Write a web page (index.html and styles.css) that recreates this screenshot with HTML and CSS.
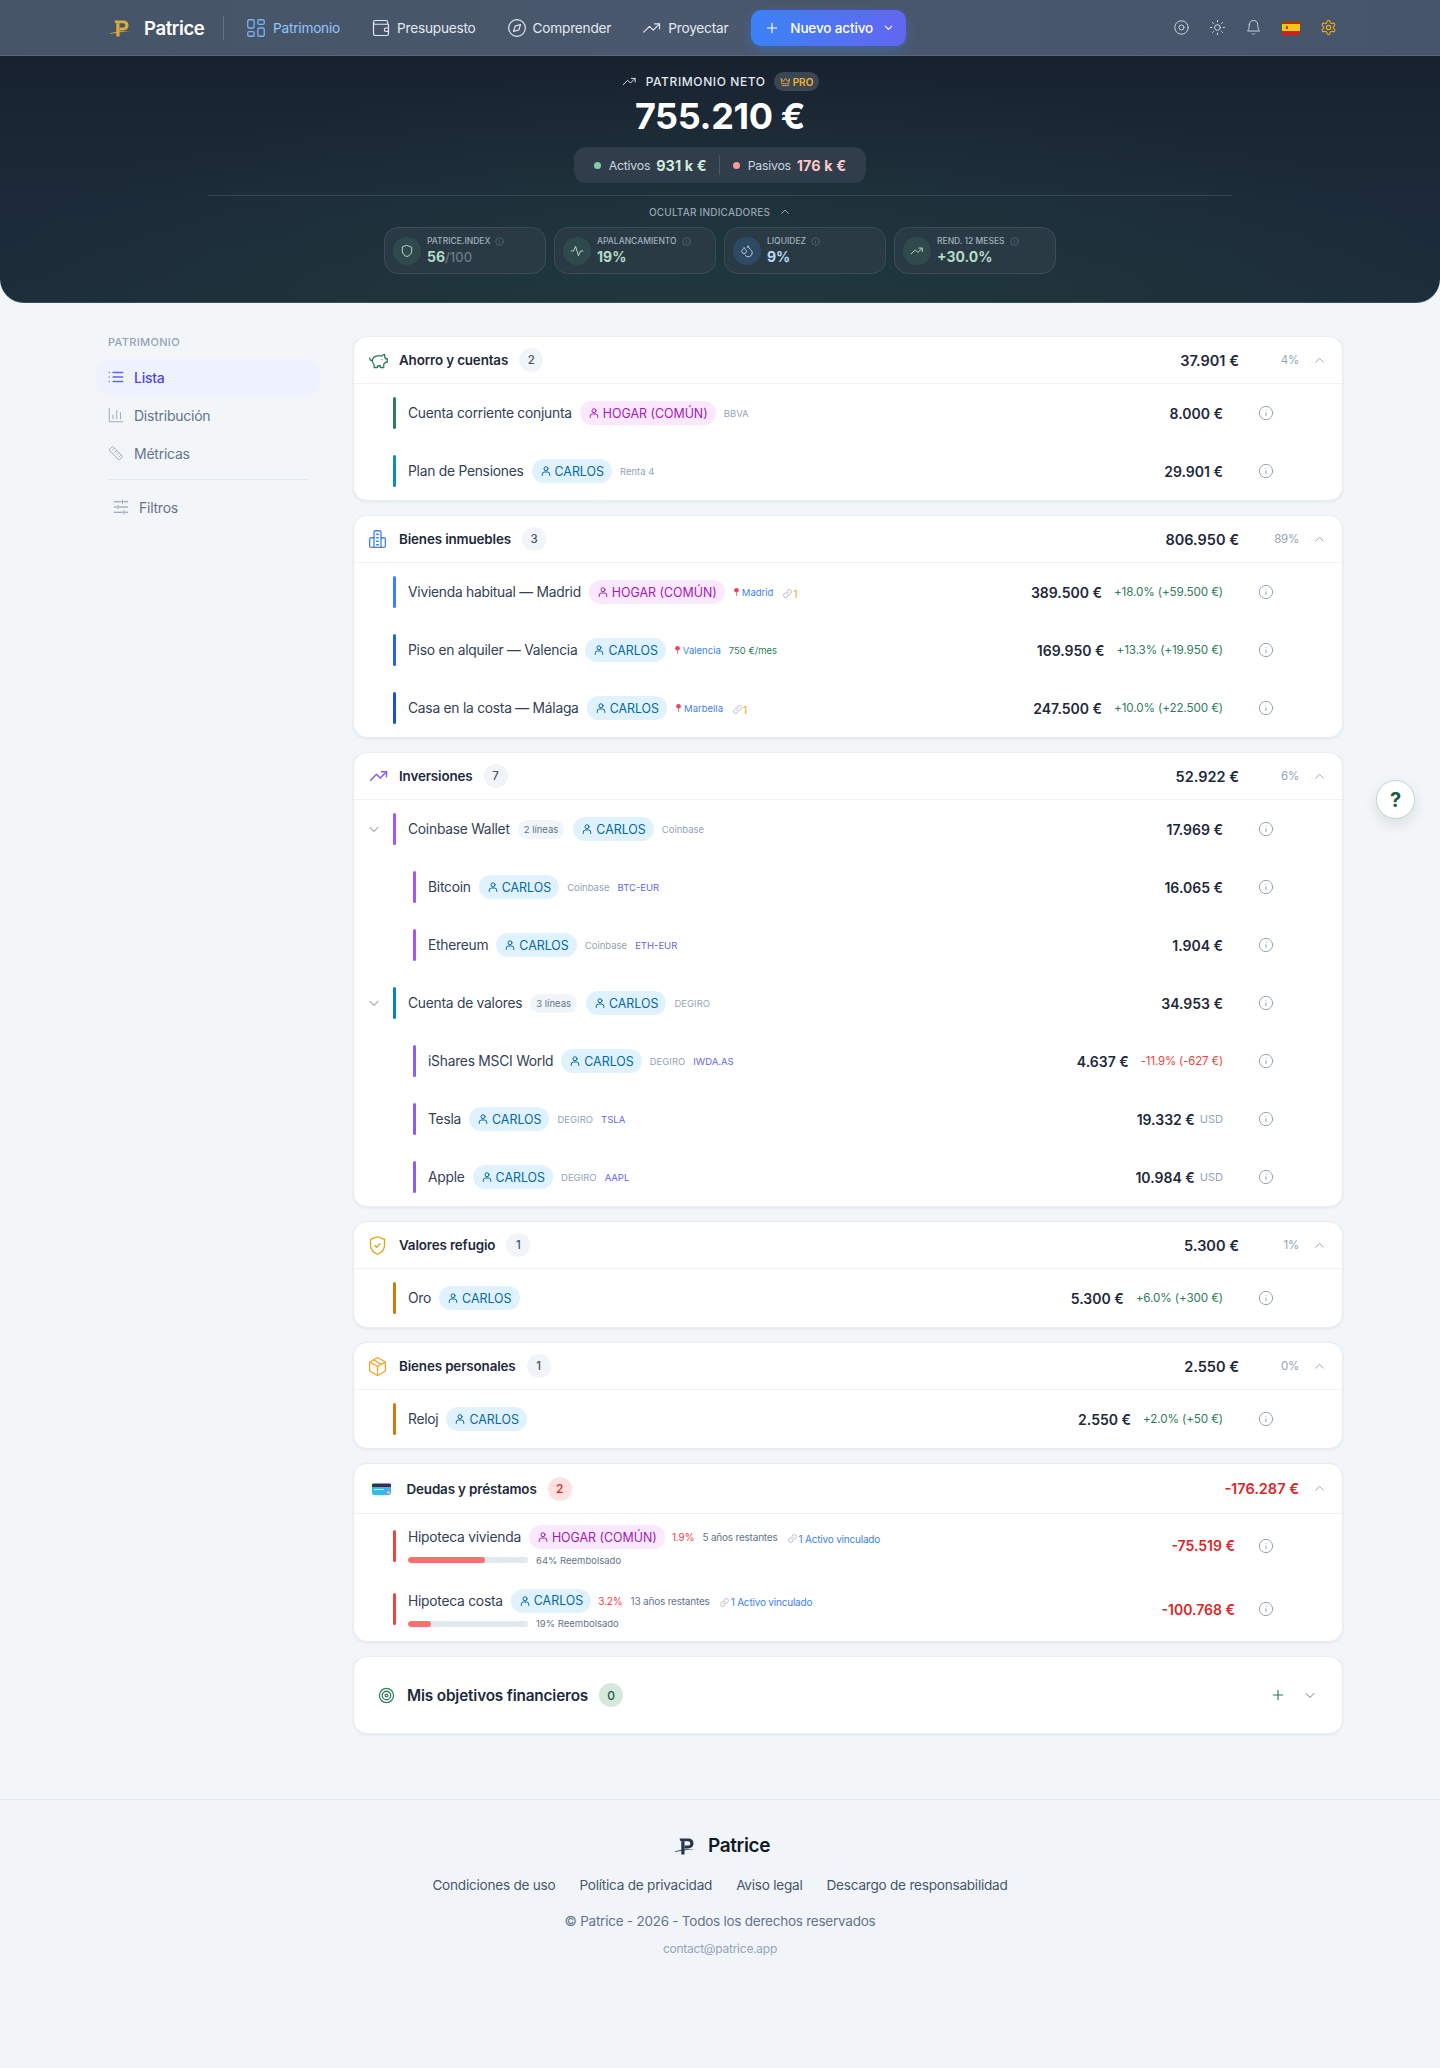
FILE: index.html
```html
<!DOCTYPE html>
<html lang="es">
<head>
<meta charset="utf-8">
<title>Patrice</title>
<link rel="stylesheet" href="styles.css">
</head>
<body>
<svg class="sprite" width="0" height="0" aria-hidden="true">
  <symbol id="i-user" viewBox="0 0 24 24"><circle cx="12" cy="7.5" r="4"/><path d="M4.5 21v-2.5a4.5 4.5 0 0 1 4.5-4.5h6a4.5 4.5 0 0 1 4.5 4.5V21"/></symbol>
  <symbol id="i-info" viewBox="0 0 24 24"><circle cx="12" cy="12" r="10"/><path d="M12 16v-4.5M12 8h.01"/></symbol>
  <symbol id="i-up" viewBox="0 0 24 24"><path d="M5 15l7-7 7 7"/></symbol>
  <symbol id="i-down" viewBox="0 0 24 24"><path d="M5 9l7 7 7-7"/></symbol>
  <symbol id="i-trend" viewBox="0 0 24 24"><path d="M2 17l7-7 4.500 4.500L21 7"/><path d="M15 7h6v6"/></symbol>
  <symbol id="i-link" viewBox="0 0 24 24"><path d="M10 14a4.500 4.500 0 0 0 6.500 0l3-3a4.600 4.600 0 0 0-6.500-6.500l-1.500 1.500"/><path d="M14 10a4.500 4.500 0 0 0-6.500 0l-3 3a4.600 4.600 0 0 0 6.500 6.500l1.500-1.500"/></symbol>
  <symbol id="i-logo" viewBox="0 0 20 17"><path d="M4.500 .5H13c3.500 0 5.500 2 5.500 4.800S16.500 10.500 13 10.500H9.500V7.600H12.800c1.600 0 2.500-.9 2.500-2.300S14.400 3.200 12.800 3.200H5.500z"/><path d="M6.300 3.200h3.200v13.300H6.300z"/><path d="M0 13.300C6 11.200 13 10.800 19.800 11.500 13 11.900 7 12.400 0 13.900z"/></symbol>
  <symbol id="i-pin" viewBox="0 0 12 16"><circle cx="6" cy="5" r="4"/><rect x="5.400" y="8" width="1.200" height="7" rx=".6"/></symbol>
</svg>

<header class="topbar">
  <a class="brand">
    <svg class="brand-logo"><use href="#i-logo"/></svg>
    <span>Patrice</span>
  </a>
  <span class="topbar-sep"></span>
  <nav class="topnav">
    <a class="topnav-item is-active">
      <svg class="ico" viewBox="0 0 24 24"><rect x="3" y="3" width="7" height="9" rx="1.500"/><rect x="14" y="3" width="7" height="5" rx="1.500"/><rect x="14" y="12" width="7" height="9" rx="1.500"/><rect x="3" y="16" width="7" height="5" rx="1.500"/></svg>
      Patrimonio
    </a>
    <a class="topnav-item">
      <svg class="ico" viewBox="0 0 24 24"><path d="M20 7.500V5a2 2 0 0 0-2-2H5a2 2 0 0 0-2 2v14a2 2 0 0 0 2 2h14a2 2 0 0 0 2-2V7.500H5a2 2 0 0 1-2-2"/><path d="M21 12h-3a2 2 0 0 0 0 4h3"/></svg>
      Presupuesto
    </a>
    <a class="topnav-item">
      <svg class="ico" viewBox="0 0 24 24"><circle cx="12" cy="12" r="10"/><path d="M16.200 7.800l-2 6.400-6.400 2 2-6.400z"/></svg>
      Comprender
    </a>
    <a class="topnav-item">
      <svg class="ico"><use href="#i-trend"/></svg>
      Proyectar
    </a>
  </nav>
  <button class="new-btn">
    <svg class="new-plus" viewBox="0 0 24 24"><path d="M12 4v16M4 12h16"/></svg>
    Nuevo activo
    <svg class="new-chev"><use href="#i-down"/></svg>
  </button>
  <div class="top-actions">
    <svg class="ico top-ico" viewBox="0 0 24 24"><circle cx="12" cy="12" r="9.500"/><circle cx="12" cy="12" r="3.500"/></svg>
    <svg class="ico top-ico" viewBox="0 0 24 24"><circle cx="12" cy="12" r="4"/><path d="M12 2v2M12 20v2M4.900 4.900l1.400 1.400M17.700 17.700l1.400 1.400M2 12h2M20 12h2M4.900 19.100l1.400-1.400M17.700 6.300l1.400-1.400"/></svg>
    <svg class="ico top-ico" viewBox="0 0 24 24"><path d="M6 8a6 6 0 0 1 12 0c0 7 2.500 9 2.500 9h-17S6 15 6 8"/><path d="M10.300 21a2 2 0 0 0 3.400 0"/></svg>
    <span class="flag"><span class="flag-mid"><span class="flag-crest"></span></span></span>
    <svg class="ico top-ico gear" viewBox="0 0 24 24"><path d="M12.200 2h-.4a2 2 0 0 0-2 2v.2a2 2 0 0 1-1 1.700l-.4.300a2 2 0 0 1-2 0l-.2-.1a2 2 0 0 0-2.700.700l-.2.400a2 2 0 0 0 .7 2.700l.2.100a2 2 0 0 1 1 1.700v.5a2 2 0 0 1-1 1.700l-.2.100a2 2 0 0 0-.7 2.700l.2.400a2 2 0 0 0 2.700.7l.2-.1a2 2 0 0 1 2 0l.4.300a2 2 0 0 1 1 1.700v.2a2 2 0 0 0 2 2h.4a2 2 0 0 0 2-2v-.2a2 2 0 0 1 1-1.700l.4-.3a2 2 0 0 1 2 0l.2.100a2 2 0 0 0 2.700-.7l.2-.4a2 2 0 0 0-.7-2.700l-.2-.1a2 2 0 0 1-1-1.700v-.5a2 2 0 0 1 1-1.700l.2-.1a2 2 0 0 0 .7-2.700l-.2-.4a2 2 0 0 0-2.700-.7l-.2.100a2 2 0 0 1-2 0l-.4-.3a2 2 0 0 1-1-1.700V4a2 2 0 0 0-2-2z"/><circle cx="12" cy="12" r="3"/></svg>
  </div>
</header>

<section class="hero">
  <div class="hero-label">
    <svg class="ico hero-trend"><use href="#i-trend"/></svg>
    <span>PATRIMONIO NETO</span>
    <span class="pro">
      <svg class="pro-ico" viewBox="0 0 24 24"><path d="M3 6l4.500 6L12 5l4.500 7L21 6l-2 11H5z"/><path d="M5 21h14"/></svg>PRO
    </span>
  </div>
  <div class="hero-amount">755.210 €</div>
  <div class="hero-pill">
    <span class="dot dot-green"></span><span class="pill-label">Activos</span><b class="pill-val val-green">931 k €</b>
    <span class="pill-sep"></span>
    <span class="dot dot-red"></span><span class="pill-label">Pasivos</span><b class="pill-val val-red">176 k €</b>
  </div>
  <div class="hero-divider"></div>
  <div class="hero-toggle">OCULTAR INDICADORES <svg class="ico toggle-chev"><use href="#i-up"/></svg></div>
  <div class="metrics">
    <div class="metric">
      <span class="metric-ico"><svg class="ico" viewBox="0 0 24 24"><path d="M12 2.500l8 3v6.500c0 5-3.500 8-8 9.500-4.500-1.500-8-4.500-8-9.500V5.500z"/></svg></span>
      <div><div class="metric-label">PATRICE.INDEX <svg class="mini-info"><use href="#i-info"/></svg></div><div class="metric-val">56<span class="metric-of">/100</span></div></div>
    </div>
    <div class="metric">
      <span class="metric-ico"><svg class="ico" viewBox="0 0 24 24"><path d="M2 12h4l3.500-8 5 16 3.500-8h4"/></svg></span>
      <div><div class="metric-label">APALANCAMIENTO <svg class="mini-info"><use href="#i-info"/></svg></div><div class="metric-val">19%</div></div>
    </div>
    <div class="metric">
      <span class="metric-ico ico-blue"><svg class="ico" viewBox="0 0 24 24"><path d="M7 16.500c2.200 0 4-1.800 4-4 0-1.200-.6-2.300-1.700-3.200S7.400 7.300 7 6c-.4 1.300-1.200 2.400-2.300 3.300S3 11.300 3 12.500c0 2.200 1.800 4 4 4z"/><path d="M12.600 6.100A11 11 0 0 0 14 3c.5 2.500 2 4.900 4 6.500s3 3.500 3 5.500a7 7 0 0 1-11.900 5"/></svg></span>
      <div><div class="metric-label">LIQUIDEZ <svg class="mini-info"><use href="#i-info"/></svg></div><div class="metric-val val-blue">9%</div></div>
    </div>
    <div class="metric">
      <span class="metric-ico"><svg class="ico"><use href="#i-trend"/></svg></span>
      <div><div class="metric-label">REND. 12 MESES <svg class="mini-info"><use href="#i-info"/></svg></div><div class="metric-val">+30.0%</div></div>
    </div>
  </div>
</section>

<main class="layout">
  <aside class="side">
    <div class="side-title">PATRIMONIO</div>
    <a class="side-item is-active">
      <svg class="ico" viewBox="0 0 24 24"><path d="M8 6h13M8 12h13M8 18h13M3 6h.01M3 12h.01M3 18h.01"/></svg>Lista
    </a>
    <a class="side-item">
      <svg class="ico" viewBox="0 0 24 24"><path d="M3 3v18h18M8 17v-5M13 17V6M18 17v-8"/></svg>Distribución
    </a>
    <a class="side-item">
      <svg class="ico" viewBox="0 0 24 24"><path d="M3 7.500L7.500 3 21 16.500 16.500 21z"/><path d="M7.500 8l1.500-1.500M10.500 11L12 9.500M13.500 14l1.500-1.500M16.500 17l1.500-1.500"/></svg>Métricas
    </a>
    <div class="side-sep"></div>
    <a class="side-filter">
      <svg class="ico" viewBox="0 0 24 24"><path d="M3 5h9M16 5h5M14 3v4M3 12h3M10 12h11M8 10v4M3 19h11M18 19h3M16 17v4"/></svg>Filtros
    </a>
  </aside>

  <div class="cards">
    <section class="card">
      <header class="card-head">
        <svg class="cat-ico c-green" viewBox="0 0 24 24"><path d="M19 5c-1.500 0-2.800 1.400-3 2-3.500-1.500-11-.3-11 5 0 1.800 0 3 2 4.500V20h4v-2h3v2h4v-4c1-.5 1.700-1 2-2h2v-4h-2c0-1-.5-1.500-1-2z"/><path d="M2 9v1c0 1.100.9 2 2 2h1"/><path d="M16 11h.01"/></svg>
        <h2 class="card-title">Ahorro y cuentas</h2><span class="count">2</span>
        <span class="card-total">37.901 €</span><span class="card-pct">4%</span>
        <svg class="card-chev"><use href="#i-up"/></svg>
      </header>
      <div class="row"><span class="bar b-green"></span><span class="name">Cuenta corriente conjunta</span><span class="tag tag-home"><svg class="tag-ico"><use href="#i-user"/></svg>HOGAR (COMÚN)</span><span class="meta">BBVA</span><span class="amount">8.000 €</span><svg class="row-info"><use href="#i-info"/></svg></div>
      <div class="row"><span class="bar b-teal"></span><span class="name">Plan de Pensiones</span><span class="tag"><svg class="tag-ico"><use href="#i-user"/></svg>CARLOS</span><span class="meta">Renta 4</span><span class="amount">29.901 €</span><svg class="row-info"><use href="#i-info"/></svg></div>
    </section>

    <section class="card">
      <header class="card-head">
        <svg class="cat-ico c-blue" viewBox="0 0 24 24"><path d="M8 21V4a2 2 0 0 1 2-2h4a2 2 0 0 1 2 2v17"/><path d="M8 10H5a2 2 0 0 0-2 2v7a2 2 0 0 0 2 2h14a2 2 0 0 0 2-2v-7a2 2 0 0 0-2-2h-3"/><path d="M11 6h2M11 10h2M11 14h2M11 18h2"/></svg>
        <h2 class="card-title">Bienes inmuebles</h2><span class="count">3</span>
        <span class="card-total">806.950 €</span><span class="card-pct">89%</span>
        <svg class="card-chev"><use href="#i-up"/></svg>
      </header>
      <div class="row"><span class="bar b-blue1"></span><span class="name">Vivienda habitual — Madrid</span><span class="tag tag-home"><svg class="tag-ico"><use href="#i-user"/></svg>HOGAR (COMÚN)</span><span class="place"><svg class="pin"><use href="#i-pin"/></svg>Madrid</span><span class="linked"><svg class="link-ico"><use href="#i-link"/></svg>1</span><span class="amount">389.500 €</span><span class="gain">+18.0% (+59.500 €)</span><svg class="row-info"><use href="#i-info"/></svg></div>
      <div class="row"><span class="bar b-blue2"></span><span class="name">Piso en alquiler — Valencia</span><span class="tag"><svg class="tag-ico"><use href="#i-user"/></svg>CARLOS</span><span class="place"><svg class="pin"><use href="#i-pin"/></svg>Valencia</span><span class="rent">750 €/mes</span><span class="amount">169.950 €</span><span class="gain">+13.3% (+19.950 €)</span><svg class="row-info"><use href="#i-info"/></svg></div>
      <div class="row"><span class="bar b-blue3"></span><span class="name">Casa en la costa — Málaga</span><span class="tag"><svg class="tag-ico"><use href="#i-user"/></svg>CARLOS</span><span class="place"><svg class="pin"><use href="#i-pin"/></svg>Marbella</span><span class="linked"><svg class="link-ico"><use href="#i-link"/></svg>1</span><span class="amount">247.500 €</span><span class="gain">+10.0% (+22.500 €)</span><svg class="row-info"><use href="#i-info"/></svg></div>
    </section>

    <section class="card">
      <header class="card-head">
        <svg class="cat-ico c-violet"><use href="#i-trend"/></svg>
        <h2 class="card-title">Inversiones</h2><span class="count">7</span>
        <span class="card-total">52.922 €</span><span class="card-pct">6%</span>
        <svg class="card-chev"><use href="#i-up"/></svg>
      </header>
      <div class="row row-group"><svg class="group-chev"><use href="#i-down"/></svg><span class="bar b-purple"></span><span class="name">Coinbase Wallet</span><span class="lines">2 líneas</span><span class="tag"><svg class="tag-ico"><use href="#i-user"/></svg>CARLOS</span><span class="meta">Coinbase</span><span class="amount">17.969 €</span><svg class="row-info"><use href="#i-info"/></svg></div>
      <div class="row row-sub"><span class="bar b-purple"></span><span class="name">Bitcoin</span><span class="tag"><svg class="tag-ico"><use href="#i-user"/></svg>CARLOS</span><span class="meta">Coinbase</span><span class="ticker">BTC-EUR</span><span class="amount">16.065 €</span><svg class="row-info"><use href="#i-info"/></svg></div>
      <div class="row row-sub"><span class="bar b-purple"></span><span class="name">Ethereum</span><span class="tag"><svg class="tag-ico"><use href="#i-user"/></svg>CARLOS</span><span class="meta">Coinbase</span><span class="ticker">ETH-EUR</span><span class="amount">1.904 €</span><svg class="row-info"><use href="#i-info"/></svg></div>
      <div class="row row-group"><svg class="group-chev"><use href="#i-down"/></svg><span class="bar b-sky"></span><span class="name">Cuenta de valores</span><span class="lines">3 líneas</span><span class="tag"><svg class="tag-ico"><use href="#i-user"/></svg>CARLOS</span><span class="meta">DEGIRO</span><span class="amount">34.953 €</span><svg class="row-info"><use href="#i-info"/></svg></div>
      <div class="row row-sub"><span class="bar b-violet"></span><span class="name">iShares MSCI World</span><span class="tag"><svg class="tag-ico"><use href="#i-user"/></svg>CARLOS</span><span class="meta">DEGIRO</span><span class="ticker">IWDA.AS</span><span class="amount">4.637 €</span><span class="loss">-11.9% (-627 €)</span><svg class="row-info"><use href="#i-info"/></svg></div>
      <div class="row row-sub"><span class="bar b-violet"></span><span class="name">Tesla</span><span class="tag"><svg class="tag-ico"><use href="#i-user"/></svg>CARLOS</span><span class="meta">DEGIRO</span><span class="ticker">TSLA</span><span class="amount">19.332 €</span><span class="cur">USD</span><svg class="row-info"><use href="#i-info"/></svg></div>
      <div class="row row-sub"><span class="bar b-violet"></span><span class="name">Apple</span><span class="tag"><svg class="tag-ico"><use href="#i-user"/></svg>CARLOS</span><span class="meta">DEGIRO</span><span class="ticker">AAPL</span><span class="amount">10.984 €</span><span class="cur">USD</span><svg class="row-info"><use href="#i-info"/></svg></div>
    </section>

    <section class="card">
      <header class="card-head">
        <svg class="cat-ico c-gold" viewBox="0 0 24 24"><path d="M12 2l8 3v7c0 5-3.500 8-8 10-4.500-2-8-5-8-10V5z"/><path d="M9 12l2 2 4-4"/></svg>
        <h2 class="card-title">Valores refugio</h2><span class="count">1</span>
        <span class="card-total">5.300 €</span><span class="card-pct">1%</span>
        <svg class="card-chev"><use href="#i-up"/></svg>
      </header>
      <div class="row"><span class="bar b-amber"></span><span class="name">Oro</span><span class="tag"><svg class="tag-ico"><use href="#i-user"/></svg>CARLOS</span><span class="amount">5.300 €</span><span class="gain">+6.0% (+300 €)</span><svg class="row-info"><use href="#i-info"/></svg></div>
    </section>

    <section class="card">
      <header class="card-head">
        <svg class="cat-ico c-orange" viewBox="0 0 24 24"><path d="M21 8a2 2 0 0 0-1-1.700l-7-4a2 2 0 0 0-2 0l-7 4A2 2 0 0 0 3 8v8a2 2 0 0 0 1 1.700l7 4a2 2 0 0 0 2 0l7-4a2 2 0 0 0 1-1.700z"/><path d="M3.300 7L12 12l8.700-5M12 22V12M7.500 4.300l9 5.200"/></svg>
        <h2 class="card-title">Bienes personales</h2><span class="count">1</span>
        <span class="card-total">2.550 €</span><span class="card-pct">0%</span>
        <svg class="card-chev"><use href="#i-up"/></svg>
      </header>
      <div class="row"><span class="bar b-amber"></span><span class="name">Reloj</span><span class="tag"><svg class="tag-ico"><use href="#i-user"/></svg>CARLOS</span><span class="amount">2.550 €</span><span class="gain">+2.0% (+50 €)</span><svg class="row-info"><use href="#i-info"/></svg></div>
    </section>

    <section class="card">
      <header class="card-head head-debt">
        <span class="debt-card"><span class="debt-stripe"></span><span class="debt-line"></span><span class="debt-chip"></span></span>
        <h2 class="card-title">Deudas y préstamos</h2><span class="count count-red">2</span>
        <span class="card-total total-red">-176.287 €</span>
        <svg class="card-chev"><use href="#i-up"/></svg>
      </header>
      <div class="row row-debt">
        <span class="bar b-red"></span>
        <div class="debt-main">
          <div class="debt-top"><span class="name">Hipoteca vivienda</span><span class="tag tag-home"><svg class="tag-ico"><use href="#i-user"/></svg>HOGAR (COMÚN)</span><span class="rate">1.9%</span><span class="years">5 años restantes</span><span class="linked-text"><svg class="link-ico"><use href="#i-link"/></svg>1 Activo vinculado</span></div>
          <div class="debt-progress"><span class="track"><span class="fill" style="width:64%"></span></span><span class="repaid">64% Reembolsado</span></div>
        </div>
        <span class="amount amount-red">-75.519 €</span><svg class="row-info"><use href="#i-info"/></svg>
      </div>
      <div class="row row-debt">
        <span class="bar b-red"></span>
        <div class="debt-main">
          <div class="debt-top"><span class="name">Hipoteca costa</span><span class="tag"><svg class="tag-ico"><use href="#i-user"/></svg>CARLOS</span><span class="rate">3.2%</span><span class="years">13 años restantes</span><span class="linked-text"><svg class="link-ico"><use href="#i-link"/></svg>1 Activo vinculado</span></div>
          <div class="debt-progress"><span class="track"><span class="fill" style="width:19%"></span></span><span class="repaid">19% Reembolsado</span></div>
        </div>
        <span class="amount amount-red">-100.768 €</span><svg class="row-info"><use href="#i-info"/></svg>
      </div>
    </section>

    <section class="card goals">
      <svg class="goal-ico" viewBox="0 0 24 24"><circle cx="12" cy="12" r="10"/><circle cx="12" cy="12" r="6"/><circle cx="12" cy="12" r="2"/></svg>
      <h2 class="goal-title">Mis objetivos financieros</h2>
      <span class="count count-green">0</span>
      <svg class="goal-plus" viewBox="0 0 24 24"><path d="M12 4v16M4 12h16"/></svg>
      <svg class="goal-chev"><use href="#i-down"/></svg>
    </section>
  </div>
</main>

<button class="help">?</button>

<footer class="footer">
  <div class="foot-brand"><svg class="foot-logo"><use href="#i-logo"/></svg><span>Patrice</span></div>
  <nav class="foot-links"><a>Condiciones de uso</a><a>Política de privacidad</a><a>Aviso legal</a><a>Descargo de responsabilidad</a></nav>
  <div class="foot-copy">© Patrice - 2026 - Todos los derechos reservados</div>
  <div class="foot-mail">contact@patrice.app</div>
</footer>
</body>
</html>
```
FILE: styles.css
```css
* { box-sizing: border-box; }
html, body { margin: 0; padding: 0; }
body {
  font-family: Inter, "Noto Sans", sans-serif;
  background: #f3f6f8;
  color: #1e293b;
  min-height: 2068px;
  display: flex;
  flex-direction: column;
  letter-spacing: -.015em;
  position: relative;
}
a { color: inherit; text-decoration: none; }
h2 { margin: 0; }
.sprite { position: absolute; }
svg { fill: none; stroke: currentColor; stroke-linecap: round; stroke-linejoin: round; flex: none; }
.ico { width: 16px; height: 16px; stroke-width: 1.5; }

/* top bar */
.topbar {
  height: 56px;
  display: flex;
  align-items: center;
  padding: 0 0 0 110px;
  background: linear-gradient(90deg, #465468, #4a586d 50%, #46556a);
  border-bottom: 1px solid #5b687b;
  color: #e2e8f0;
}
.brand { display: flex; align-items: center; gap: 14px; font-size: 18.500px; font-weight: 600; color: #fff; width: 95px; letter-spacing: -.02em; }
.brand-logo { width: 20px; height: 17px; fill: #dcab3f; stroke: none; margin-top: 2px; }
.topbar-sep { width: 1px; height: 24px; background: #64718a; margin: 0 21px 0 18px; }
.topnav { display: flex; gap: 31px; }
.topnav-item { display: flex; align-items: center; gap: 6px; font-size: 13.700px; font-weight: 400; color: #e2e8f0; }
.topnav-item .ico { width: 20px; height: 20px; stroke-width: 1.400; }
.topnav-item.is-active { color: #93c5fd; }
.topnav-item.is-active .ico { width: 22px; height: 22px; color: #7db3f5; }
.new-btn {
  width: 155px; height: 36px; margin-left: 23px;
  border: 0; border-radius: 10px;
  background: linear-gradient(90deg, #3b82f6, #6366f1);
  color: #fff; font: 500 13.500px Inter, sans-serif; letter-spacing: -.01em;
  display: flex; align-items: center; gap: 11px; padding: 0 0 0 14px;
  box-shadow: 0 4px 12px rgba(59, 130, 246, .35);
}
.new-plus { width: 14px; height: 14px; stroke-width: 2; }
.new-chev { width: 11px; height: 11px; stroke-width: 2.500; margin-left: -1px; }
.top-actions { display: flex; align-items: center; gap: 19px; margin-left: auto; padding-right: 103px; color: #cbd5e1; }
.top-ico { width: 17px; height: 17px; stroke-width: 1.400; }
.flag { width: 18px; height: 14px; border-radius: 2px; background: #c0271d; padding: 3.500px 0; margin: 0 1px; }
.flag-mid { display: block; height: 7px; background: #f5c518; padding: 2px 0 0 4px; }
.flag-crest { display: block; width: 2px; height: 3px; background: #b5451d; }
.gear { color: #f5b301; stroke-width: 1.500; }

/* hero */
.hero {
  height: 247px;
  border-radius: 0 0 24px 24px;
  background:
    radial-gradient(ellipse 760px 240px at 50% 105%, #20393d 0, rgba(32, 57, 61, 0) 100%),
    linear-gradient(180deg, #18222f, #1c2a39 60%, #1d2d3a);
  box-shadow: inset 0 -1px 0 rgba(62, 130, 105, .45);
  color: #fff;
  display: flex; flex-direction: column; align-items: center;
  padding-top: 16px;
}
.hero-label { display: flex; align-items: center; gap: 7px; height: 19px; font-size: 12px; font-weight: 500; letter-spacing: .05em; color: #e2e8f0; }
.hero-trend { width: 17px; height: 15px; margin-right: 1px; }
.pro { display: flex; align-items: center; gap: 2px; height: 19px; padding: 0 6px; margin-left: 1px; border-radius: 10px; background: #3a4654; color: #f5b233; font-size: 10px; font-weight: 600; letter-spacing: 0; }
.pro-ico { width: 11px; height: 11px; stroke-width: 1.800; }
.hero-amount { font-size: 36px; font-weight: 700; line-height: 46px; margin-top: 2px; letter-spacing: -.01em; }
.hero-pill {
  display: flex; align-items: center; height: 36px; margin-top: 8px; padding: 0 20px;
  border-radius: 12px; background: #303d4a; font-size: 12.300px; color: #cbd5e1;
}
.dot { width: 7px; height: 7px; border-radius: 50%; margin-right: 8px; }
.dot-green { background: #86c9a6; }
.dot-red { background: #f89a9a; }
.pill-val { margin-left: 6px; font-size: 14.300px; font-weight: 700; letter-spacing: .01em; }
.val-green { color: #d1ebdc; }
.val-red { color: #fecaca; }
.pill-sep { width: 1px; height: 20px; background: #4b5866; margin: 0 13px 0 12px; }
.hero-divider { width: 1024px; height: 1px; background: rgba(148, 163, 184, .22); margin-top: 12px; }
.hero-toggle { display: flex; align-items: center; gap: 9px; height: 14px; margin-top: 9px; font-size: 10px; font-weight: 500; letter-spacing: .02em; color: #97a3b2; }
.toggle-chev { width: 12px; height: 12px; stroke-width: 2; }
.metrics { display: grid; grid-template-columns: repeat(4, 162px); gap: 8px; margin-top: 8px; }
.metric { height: 47px; display: flex; align-items: center; gap: 6px; padding-left: 8px; border-radius: 14px; border: 1px solid #3b4c58; background: #293a45; }
.metric-ico { width: 28px; height: 28px; border-radius: 50%; background: #2f4a4c; color: #c7e6d6; display: flex; align-items: center; justify-content: center; }
.metric-ico .ico { width: 14px; height: 14px; }
.ico-blue { background: #2e4a63; color: #c9def7; }
.metric-label { display: flex; align-items: center; gap: 3px; font-size: 8.500px; font-weight: 500; letter-spacing: 0; color: #a3afbc; line-height: 12px; }
.mini-info { width: 9px; height: 9px; stroke-width: 1.800; color: #5f6f7c; margin-left: 2px; }
.metric-val { font-size: 14px; font-weight: 700; color: #b3dcc5; line-height: 18px; margin-top: 1px; letter-spacing: 0; }
.metric-of { font-weight: 500; font-size: 13px; color: #6c7b88; }
.val-blue { color: #bcd8f7; }

/* main layout */
.layout { display: flex; padding: 33px 97px 0 96px; align-items: flex-start; gap: 33px; }
.side { width: 224px; flex: none; color: #64748b; }
.side-title { font-size: 11px; font-weight: 500; letter-spacing: .03em; color: #94a3b8; padding-left: 12px; line-height: 12px; margin-bottom: 11px; }
.side-item { display: flex; align-items: center; gap: 9px; height: 36px; margin-bottom: 2px; padding-left: 11px; border-radius: 12px; font-size: 14px; }
.side-item .ico { width: 18px; height: 18px; color: #94a3b8; stroke-width: 1.200; }
.side-item.is-active { background: #eef2ff; color: #4f46e5; font-weight: 500; }
.side-item.is-active .ico { color: #6366f1; stroke-width: 1.800; }
.side-sep { height: 1px; background: #e2e8f0; margin: 8px 12px 9px; }
.side-filter { display: flex; align-items: center; gap: 9px; height: 36px; padding-left: 16px; font-size: 14px; }
.side-filter .ico { width: 18px; height: 18px; color: #7b899c; stroke-width: 1.200; }

.cards { width: 990px; flex: none; display: flex; flex-direction: column; gap: 14px; }
.card { background: #fff; border-radius: 14px; border: 1px solid #e7edf3; box-shadow: 0 1px 3px rgba(15, 23, 42, .07); }
.card-head { height: 47px; border-bottom: 1px solid #eef2f6; display: flex; align-items: center; padding-left: 13px; }
.cat-ico { width: 21px; height: 21px; stroke-width: 1.500; margin-right: 11px; }
.c-green { color: #2f7d5b; margin: 0 10px 0 1px; }
.c-blue { color: #3b82f6; }
.c-violet { color: #8b5cf6; stroke-width: 1.800; width: 20px; height: 20px; margin: 0 10px 0 2px; }
.c-gold { color: #e0a31a; }
.c-orange { color: #f4a52a; }
.card-title { font-size: 13.400px; font-weight: 600; color: #1e293b; letter-spacing: -.01em; }
.count { width: 24px; height: 24px; margin-left: 11px; border-radius: 50%; background: #f1f5f9; color: #475569; display: flex; align-items: center; justify-content: center; font-size: 11.500px; font-weight: 500; }
.card-total { margin-left: auto; font-size: 14.500px; font-weight: 600; color: #1e293b; letter-spacing: 0; }
.card-pct { width: 60px; text-align: right; font-size: 11.500px; color: #94a3b8; }
.card-chev { width: 13px; height: 13px; stroke-width: 1.800; color: #94a3b8; margin: 0 16px 0 14px; }

.row { height: 58px; display: flex; align-items: center; padding: 0 0 0 39px; }
.bar { width: 3px; height: 32px; border-radius: 2px; margin-right: 12px; flex: none; }
.row-sub { padding-left: 59px; }
.row-group { padding-left: 13px; }
.group-chev { width: 14px; height: 14px; stroke-width: 1.800; color: #94a3b8; margin-right: 12px; }
.b-green { background: #2f7d5b; }
.b-teal { background: #0891b2; }
.b-blue1 { background: #3b82f6; }
.b-blue2 { background: #2563eb; }
.b-blue3 { background: #1d4ed8; }
.b-purple { background: #a855f7; }
.b-sky { background: #0284c7; }
.b-violet { background: #8b5cf6; }
.b-amber { background: #d97706; }
.b-red { background: #ef4444; }
.name { font-size: 13.800px; color: #334155; white-space: nowrap; }
.tag { height: 24px; margin-left: 8px; padding: 0 8px; border-radius: 12px; background: #e0f2fe; color: #0369a1; display: inline-flex; align-items: center; gap: 3px; font-size: 12.400px; font-weight: 400; letter-spacing: 0; white-space: nowrap; }
.tag-home { background: #fae8ff; color: #a21caf; }
.tag-ico { width: 12px; height: 12px; stroke-width: 2; }
.meta { margin-left: 8px; font-size: 9.500px; color: #94a3b8; letter-spacing: 0; }
.ticker { margin-left: 8px; font-size: 9.500px; color: #6366f1; letter-spacing: 0; }
.lines { margin: 0 1px 0 8px; height: 19px; padding: 0 6px; border-radius: 10px; background: #f1f5f9; color: #64748b; font-size: 9.500px; display: inline-flex; align-items: center; letter-spacing: 0; }
.place { margin-left: 8px; font-size: 9.500px; color: #3b82f6; display: inline-flex; align-items: center; gap: 2px; letter-spacing: 0; }
.pin { width: 7px; height: 10px; fill: #f43f5e; stroke: none; }
.rent { margin-left: 8px; font-size: 9.500px; color: #2f7d5b; letter-spacing: 0; }
.linked { margin-left: 9px; margin-top: 3px; font-size: 10px; color: #f59e0b; display: inline-flex; align-items: center; }
.link-ico { width: 11px; height: 11px; color: #b8b4c8; stroke-width: 2; }
.amount { margin-left: auto; font-size: 14px; font-weight: 600; color: #1e293b; letter-spacing: 0; white-space: nowrap; }
.gain, .loss { margin-left: 12px; font-size: 11.700px; color: #2f7d5b; letter-spacing: -.01em; white-space: nowrap; }
.loss { color: #ef4444; font-size: 11.400px; }
.cur { margin-left: 5px; font-size: 11px; color: #94a3b8; letter-spacing: 0; }
.row-info { width: 16px; height: 16px; stroke-width: 1.500; color: #94a3b8; margin: 0 68px 0 35px; }
.row-debt { height: 63.500px; }
.debt-main { display: flex; flex-direction: column; gap: 7px; margin-top: -2.500px; }
.debt-top { display: flex; align-items: center; height: 24px; }
.rate { margin-left: 7px; font-size: 10px; color: #ef4444; letter-spacing: -.01em; }
.years { margin-left: 8px; font-size: 10px; color: #64748b; letter-spacing: -.02em; }
.linked-text { margin-left: 9px; margin-top: 3px; font-size: 10px; color: #3b82f6; display: inline-flex; align-items: center; gap: 1px; letter-spacing: -.02em; }
.debt-progress { display: flex; align-items: center; gap: 8px; height: 8px; }
.track { width: 120px; height: 6px; border-radius: 3px; background: #e2e8f0; overflow: hidden; display: block; }
.fill { display: block; height: 6px; background: #f87171; border-radius: 3px; }
.repaid { font-size: 9.500px; color: #64748b; letter-spacing: 0; }
.amount-red { color: #dc2626; }
.row-debt .row-info { margin-left: 23px; }
.head-debt { height: 50px; padding-left: 18px; }
.debt-card { width: 19px; height: 12px; margin-right: 15.500px; border-radius: 2px; background: #3cb4ee; overflow: hidden; display: block; flex: none; }
.debt-stripe { display: block; height: 3px; margin-top: 1px; background: #25374b; }
.debt-line { display: block; width: 10px; height: 1px; margin: 2px 0 0 2px; background: #c8e8f8; }
.debt-chip { display: block; width: 3px; height: 3px; margin: 1px 0 0 15px; background: #f5c518; }
.count-red { background: #fee2e2; color: #dc2626; font-size: 12px; margin-left: 11px; }
.total-red { color: #dc2626; }
.goals { height: 78px; display: flex; align-items: center; padding-left: 24px; }
.goal-ico { width: 17px; height: 17px; stroke-width: 1.800; color: #2f7d5b; margin-right: 12px; }
.goal-title { font-size: 15.300px; font-weight: 600; color: #1e293b; letter-spacing: -.01em; }
.count-green { background: #d4e8dc; color: #245c43; margin-left: 11px; font-size: 12px; }
.goal-plus { width: 14px; height: 14px; stroke-width: 2; color: #2f7d5b; margin-left: auto; }
.goal-chev { width: 14px; height: 14px; stroke-width: 1.800; color: #94a3b8; margin: 0 25px 0 18px; }

.help {
  position: absolute; left: 1376px; top: 780px;
  width: 39px; height: 39px; border-radius: 50%; padding: 0;
  border: 1px solid #b7dcc8; background: #fff; color: #1f5b45;
  font: 700 20px Inter, sans-serif;
  box-shadow: 0 6px 14px rgba(15, 23, 42, .1);
}

.footer {
  flex: 1; margin-top: 65px; border-top: 1px solid #e2e8f0; background: #f1f5f9;
  display: flex; flex-direction: column; align-items: center; padding-top: 33px;
}
.foot-brand { display: flex; align-items: center; gap: 13px; font-size: 19px; font-weight: 600; color: #111827; line-height: 26px; letter-spacing: -.02em; padding-left: 5px; }
.foot-logo { width: 20px; height: 17px; fill: #27344f; stroke: none; }
.foot-links { display: flex; gap: 24px; margin-top: 13px; font-size: 13.600px; color: #475569; line-height: 26px; }
.foot-copy { margin-top: 10px; font-size: 13.500px; color: #64748b; line-height: 26px; }
.foot-mail { margin-top: 2px; font-size: 12px; color: #94a3b8; line-height: 26px; }
```
